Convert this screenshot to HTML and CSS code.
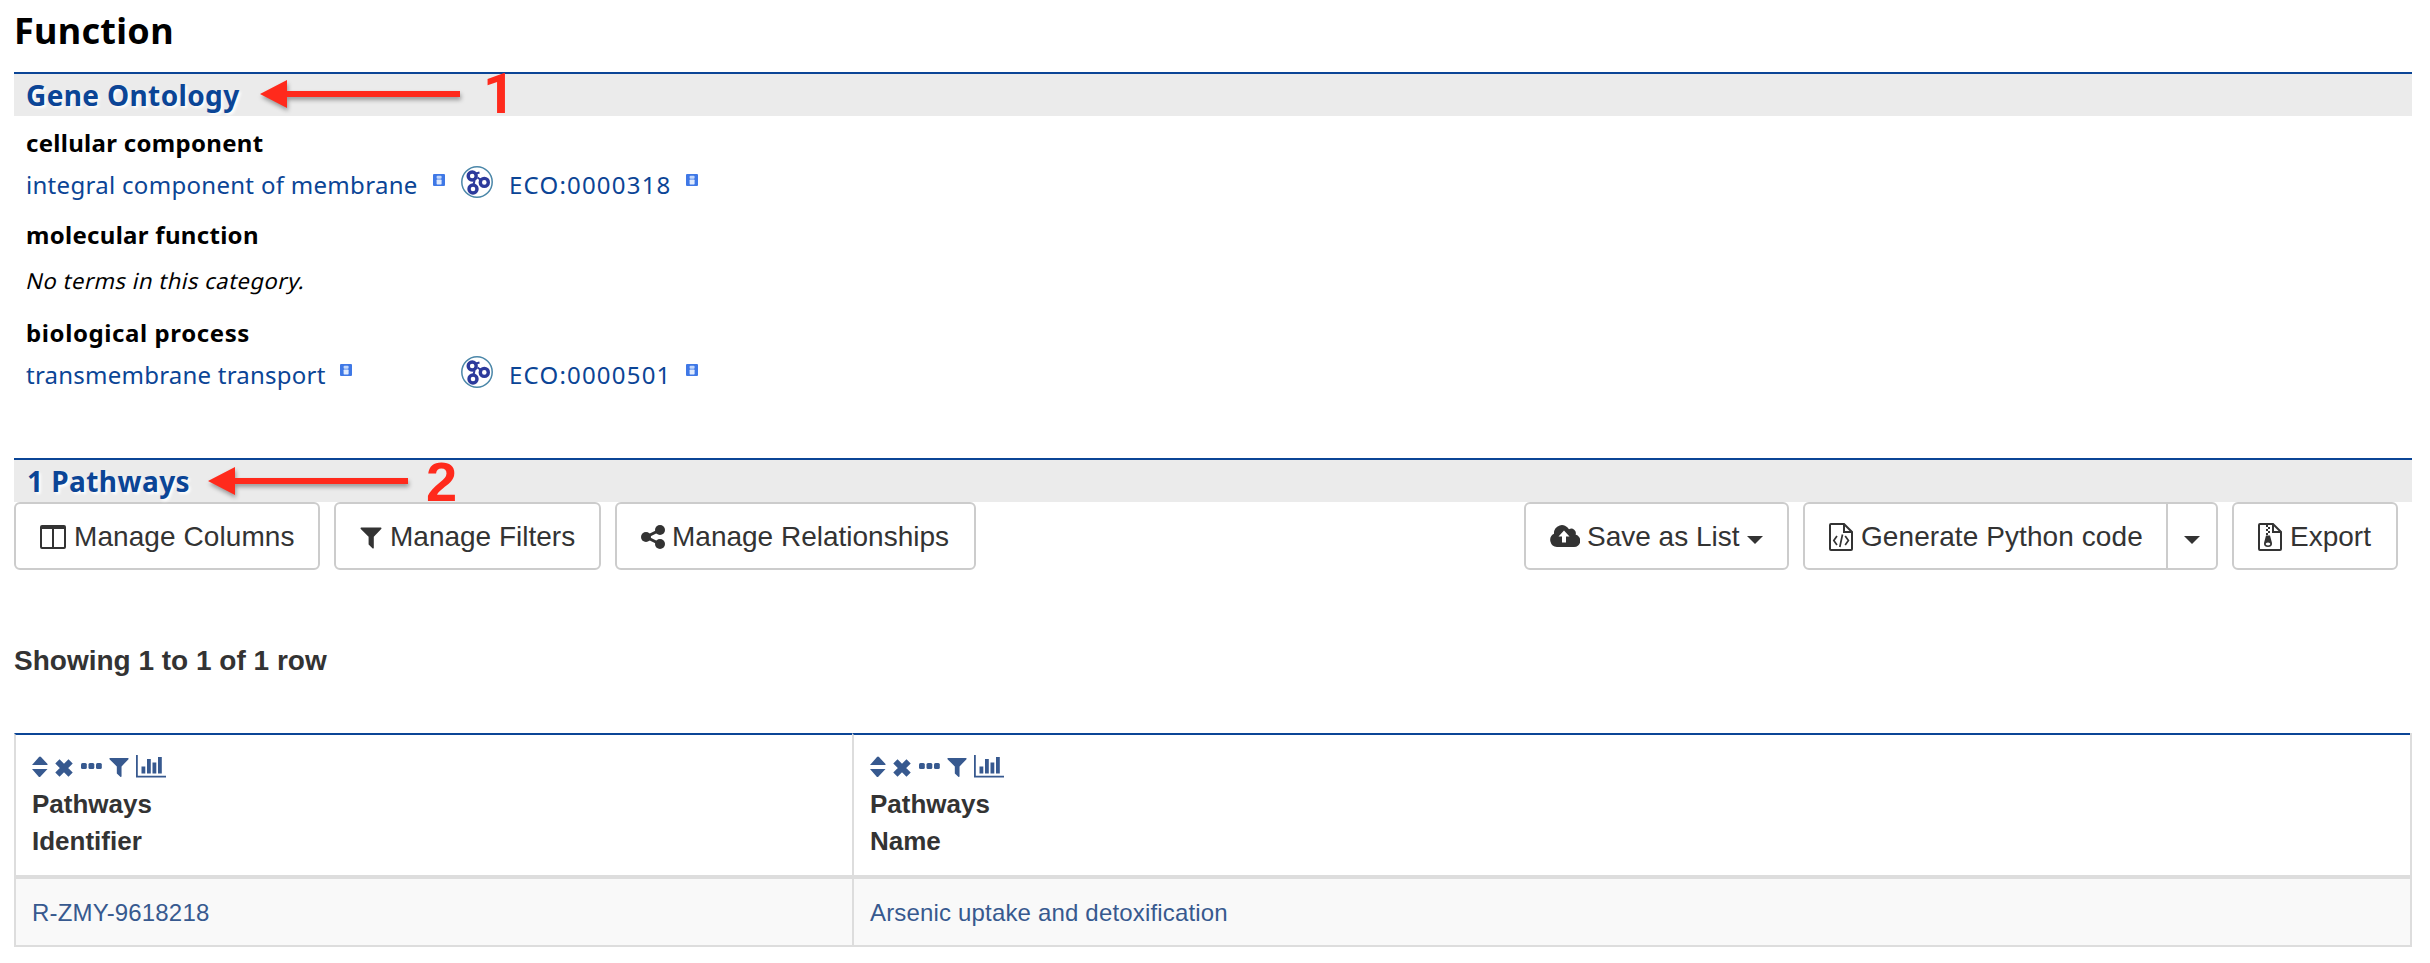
FILE: index.html
```html
<!DOCTYPE html>
<html lang="en">
<head>
<meta charset="utf-8">
<title>Function</title>
<link rel="stylesheet" href="styles.css">
</head>
<body>
<svg class="defs" width="0" height="0">
  <symbol id="i-info" viewBox="0 0 12 12"><rect width="12" height="12" rx="1" fill="#3f78e6"/><rect x="3.6" y="1.8" width="5" height="3" rx="1" fill="#c4d8fb"/><rect x="3.6" y="5.6" width="5" height="4.8" rx=".6" fill="#dfeafd"/></symbol>
  <symbol id="i-go" viewBox="0 0 32 32"><circle cx="16" cy="16" r="15.2" fill="#fff" stroke="#4a86a8" stroke-width="1.5"/><g fill="none" stroke="#2c3a9c" stroke-width="3.4"><circle cx="11.2" cy="10" r="4"/><circle cx="12" cy="23" r="4"/><circle cx="23.3" cy="16.4" r="4"/><path d="M13.5 14.5 12.6 18.5M15 7.5l3.500-1M16.500 11.500l3.500 2.500" stroke-width="2"/></g></symbol>
  <symbol id="i-sort" viewBox="0 0 16 22"><path d="M0 9 7 1q1-1 2 0l6.500 7V9zM0 13h15.500L8.500 20.500q-1 1-2 0z" fill="currentColor"/></symbol>
  <symbol id="i-x" viewBox="0 0 18 18"><path d="M2.400 2.400l13.200 13.200M15.600 2.400 2.400 15.600" stroke="currentColor" stroke-width="6" fill="none"/></symbol>
  <symbol id="i-dots" viewBox="0 0 21 6"><g fill="currentColor"><rect width="5.800" height="6" rx="1.500"/><rect x="7.500" width="5.800" height="6" rx="1.500"/><rect x="15" width="5.800" height="6" rx="1.500"/></g></symbol>
  <symbol id="i-filter" viewBox="0 0 22 22"><path d="M1 0.500h20q1 .6.200 1.600L13.800 9.800V21q-.5.900-1.400.3L8.600 17.600V9.800L.8 2.100Q0 1.100 1 .5z" fill="currentColor"/></symbol>
  <symbol id="i-chart" viewBox="0 0 30 23"><path d="M0 0h1.800v20.800H30V22.600H0zM5.500 11.500h3.800v7H5.500zM11 4h3.800v14.500H11zM16.500 7.500h3.800v11h-3.800zM22 2h3.800v16.500H22z" fill="currentColor"/></symbol>
  <symbol id="i-cols" viewBox="0 0 26 24"><path fill-rule="evenodd" d="M2 0h22q2 0 2 2v20q0 2-2 2H2q-2 0-2-2V2q0-2 2-2zM2 4v17.500q0 .5.500.5H12V4zM14 4v18h9.500q.5 0 .5-.5V4z" fill="currentColor"/></symbol>
  <symbol id="i-share" viewBox="0 0 24 24"><path d="M19 5 5 12l14 7" fill="none" stroke="currentColor" stroke-width="3"/><g fill="currentColor"><circle cx="19" cy="5" r="5"/><circle cx="5" cy="12" r="5"/><circle cx="19" cy="19" r="5"/></g></symbol>
  <symbol id="i-cloud" viewBox="0 0 30 22"><path d="M7 22a7 7 0 0 1-3-13.200A8 8 0 0 1 19 4.300 4.500 4.500 0 0 1 25.600 9.600 6.300 6.300 0 0 1 24 22z" fill="currentColor"/><path d="M14 5.500 19.500 11.500H16v6h-4v-6H8.500z" fill="#fff"/></symbol>
  <symbol id="i-code" viewBox="0 0 24 28"><g fill="none" stroke="currentColor" stroke-width="2"><path d="M1 2q0-1 1-1h13l8 8v17q0 1-1 1H2q-1 0-1-1zM15 1v8h8"/><path d="M8 13 4.800 17.500l3.200 4.500M16.200 13l3.200 4.500-3.200 4.500M13.500 11.500l-2.700 12.500" stroke-width="1.700"/></g></symbol>
  <symbol id="i-zip" viewBox="0 0 24 28"><path d="M1 2q0-1 1-1h13l8 8v17q0 1-1 1H2q-1 0-1-1zM15 1v8h8" fill="none" stroke="currentColor" stroke-width="2"/><path fill-rule="evenodd" d="M8 2h2v2H8zM10 4h2v2h-2zM8 6h2v2H8zM10 8h2v2h-2zM8 10h2v2H8zM8 12.500h4l2 7.500q.4 4-4 4t-4-4zM10 19.500c-3 0-3 3 0 3s3-3 0-3z" fill="currentColor"/></symbol>
  <symbol id="i-caret" viewBox="0 0 16 8"><path d="M0 0h16L8 8z" fill="currentColor"/></symbol>
  <symbol id="i-arrow" viewBox="0 0 200 30"><path d="M0 15 27 1v11h173v6H27v11z" fill="#ff2a1c"/></symbol>
</svg>

<main class="page">
  <h1 class="title">Function</h1>

  <section class="ontology">
    <h2 class="bar"><span class="t-gene">Gene Ontology</span>
      <span class="note note-1"><svg class="arrow"><use href="#i-arrow"/></svg><b class="digit">1</b></span></h2>
    <h3 class="category c1">cellular component</h3>
    <div class="term"><a class="name"><span class="t-integral">integral component of membrane</span><svg class="info"><use href="#i-info"/></svg></a><svg class="go"><use href="#i-go"/></svg><a class="eco"><span class="t-eco">ECO:0000318</span><svg class="info"><use href="#i-info"/></svg></a></div>
    <h3 class="category c2">molecular function</h3>
    <p class="empty"><span class="slant">No terms in this category.</span></p>
    <h3 class="category c3">biological process</h3>
    <div class="term"><a class="name"><span class="t-trans">transmembrane transport</span><svg class="info"><use href="#i-info"/></svg></a><svg class="go"><use href="#i-go"/></svg><a class="eco"><span class="t-eco">ECO:0000501</span><svg class="info"><use href="#i-info"/></svg></a></div>
  </section>

  <section class="pathways">
    <h2 class="bar"><span class="t-path">1 Pathways</span>
      <span class="note note-2"><svg class="arrow"><use href="#i-arrow"/></svg><b class="digit">2</b></span></h2>
    <div class="toolbar">
      <button class="btn b-cols"><svg class="ic-cols"><use href="#i-cols"/></svg><span>Manage Columns</span></button>
      <button class="btn b-filters"><svg class="ic-filter"><use href="#i-filter"/></svg><span>Manage Filters</span></button>
      <button class="btn b-rel"><svg class="ic-share"><use href="#i-share"/></svg><span>Manage Relationships</span></button>
      <span class="spacer"></span>
      <button class="btn b-save"><svg class="ic-cloud"><use href="#i-cloud"/></svg><span>Save as List</span><svg class="caret"><use href="#i-caret"/></svg></button>
      <span class="group"><button class="btn b-gen"><svg class="ic-file"><use href="#i-code"/></svg><span>Generate Python code</span></button><button class="btn b-drop"><svg class="caret"><use href="#i-caret"/></svg></button></span>
      <button class="btn b-export"><svg class="ic-file"><use href="#i-zip"/></svg><span>Export</span></button>
    </div>
    <p class="showing">Showing 1 to 1 of 1 row</p>
    <div class="table">
      <div class="head cell"><div class="icons"><svg class="s-sort"><use href="#i-sort"/></svg><svg class="s-x"><use href="#i-x"/></svg><svg class="s-dots"><use href="#i-dots"/></svg><svg class="s-filter"><use href="#i-filter"/></svg><svg class="s-chart"><use href="#i-chart"/></svg></div>Pathways<br>Identifier</div>
      <div class="head cell"><div class="icons"><svg class="s-sort"><use href="#i-sort"/></svg><svg class="s-x"><use href="#i-x"/></svg><svg class="s-dots"><use href="#i-dots"/></svg><svg class="s-filter"><use href="#i-filter"/></svg><svg class="s-chart"><use href="#i-chart"/></svg></div>Pathways<br>Name</div>
      <div class="data cell">R-ZMY-9618218</div>
      <div class="data cell">Arsenic uptake and detoxification</div>
    </div>
  </section>
</main>
</body>
</html>
```
FILE: styles.css
```css
* { box-sizing: border-box; }
body { margin: 0; background: #fff; color: #000; font-family: "Noto Sans", sans-serif; }
.defs { position: absolute; }
svg { display: block; flex: none; }
h1, h2, h3, p { margin: 0; }
.page { width: 2430px; height: 963px; padding: 0 18px 0 14px; overflow: hidden; }
.title { height: 72px; padding-top: 6px; font-size: 36px; line-height: 50px; letter-spacing: .3px; }
.bar { position: relative; height: 44px; padding-left: 12px; border-top: 2px solid #0b4596; background: #ebebeb; color: #0b4596; font-size: 28px; line-height: 42px; text-shadow: 2px 2px 3px #fff; white-space: nowrap; }
.t-gene { letter-spacing: .37px; }
.t-path { letter-spacing: .45px; }
.note { position: absolute; top: 0; display: flex; text-shadow: none; }
.note-1 { left: 246px; top: 5px; }
.note-2 { left: 194px; top: 6px; }
.arrow { width: 200px; height: 30px; overflow: visible; filter: drop-shadow(1px 3px 2px rgba(0,0,0,.35)); }
.digit { margin: -5px 0 0 18px; height: 42px; color: #ff2a1c; font: bold 56px/42px "Liberation Sans", Arial, sans-serif; }
.note-1 .digit { margin: -6px 0 0 23px; font-family: Roboto, Arial, sans-serif; }
.category { padding-left: 12px; font-size: 24px; line-height: 32px; letter-spacing: .3px; white-space: nowrap; }
.c1 { margin-top: 11px; }
.c2 { margin-top: 16px; }
.c3 { margin-top: 20px; letter-spacing: .6px; }
.term { display: flex; height: 44px; padding-left: 12px; color: #0b4596; font-size: 24px; line-height: 52px; white-space: nowrap; }
.name { display: flex; width: 435px; }
.name .info { margin-left: 16px; }
.t-integral { width: 391px; letter-spacing: .3px; }
.t-trans { width: 298px; letter-spacing: .23px; }
.t-eco { width: 162px; letter-spacing: 1.2px; }
.info { width: 12px; height: 12px; margin-top: 15px; }
.go { width: 32px; height: 32px; margin-top: 7px; }
.eco { display: flex; margin-left: 16px; }
.eco .info { margin-left: 15px; }
.empty { margin-top: 14px; padding-left: 13px; height: 32px; font-size: 22px; line-height: 31px; white-space: nowrap; }
.slant { display: inline-block; transform: skewX(-13deg); letter-spacing: .5px; }
.pathways { margin-top: 65px; color: #333; font-family: "Liberation Sans", Arial, sans-serif; }
.pathways .bar { padding-left: 13px; font-family: "Noto Sans", sans-serif; }
.toolbar { display: flex; height: 68px; padding-right: 14px; }
.btn { display: flex; align-items: center; height: 68px; padding: 2px 0 0 24px; border: 2px solid #ccc; border-radius: 6px; background: #fff; color: #333; font: 28px/40px "Liberation Sans", Arial, sans-serif; white-space: nowrap; }
.b-cols { width: 306px; letter-spacing: .08px; }
.b-filters { width: 267px; margin-left: 14px; }
.b-rel { width: 361px; margin-left: 14px; }
.spacer { flex: 1; }
.b-save { width: 265px; }
.group { display: flex; margin: 0 14px; }
.b-gen { width: 365px; border-radius: 6px 0 0 6px; letter-spacing: .08px; }
.b-drop { width: 52px; margin-left: -2px; padding-left: 16px; border-radius: 0 6px 6px 0; }
.b-export { width: 166px; }
.ic-cols { width: 26px; height: 24px; margin-right: 8px; }
.ic-filter { width: 22px; height: 22px; margin: 2px 8px 0 0; }
.ic-share { width: 24px; height: 24px; margin-right: 7px; }
.ic-cloud { width: 30px; height: 22px; margin: 0 7px 2px 0; }
.ic-file { width: 24px; height: 28px; margin-right: 8px; }
.caret { width: 16px; height: 8px; margin-top: 6px; }
.b-save .caret { margin-left: 7px; }
.showing { margin-top: 71px; height: 40px; font-size: 28px; line-height: 40px; font-weight: bold; }
.table { display: grid; grid-template-columns: 838px 1fr; margin-top: 52px; border-right: 2px solid #ddd; }
.cell { border-left: 2px solid #ddd; padding-left: 16px; }
.head { height: 146px; padding-top: 21px; border-top: 2px solid #0b4596; border-bottom: 4px solid #ddd; font-size: 26px; line-height: 37px; font-weight: bold; }
.data { height: 68px; border-bottom: 2px solid #ddd; background: #f9f9f9; color: #37598f; font-size: 24px; line-height: 67px; letter-spacing: .17px; }
.icons { display: flex; height: 30px; margin-left: -.5px; color: #37598f; }
.s-sort { width: 16px; height: 22px; }
.s-x { width: 18px; height: 18px; margin: 3px 0 0 7px; }
.s-dots { width: 21px; height: 6px; margin: 7px 0 0 8px; }
.s-filter { width: 20px; height: 21px; margin: 1px 0 0 7px; }
.s-chart { width: 30px; height: 23px; margin: -1px 0 0 7px; }
```
